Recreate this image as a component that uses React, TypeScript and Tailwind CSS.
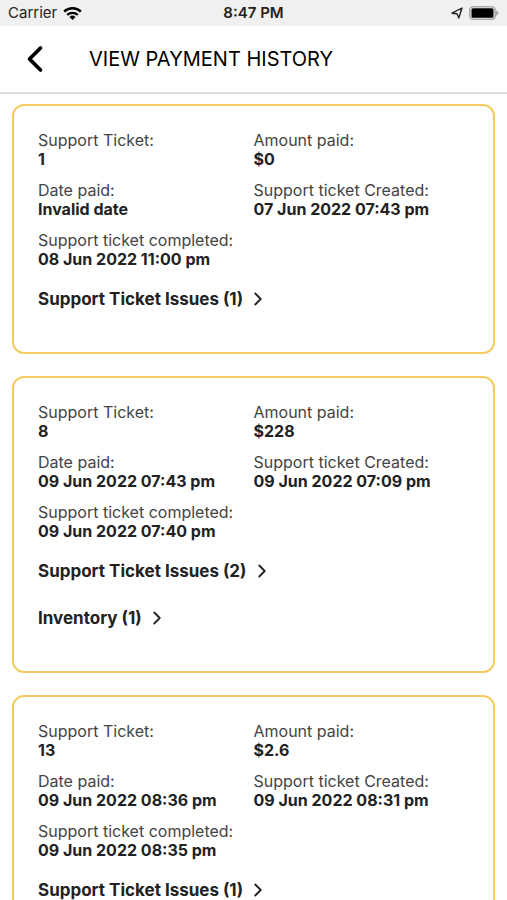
import { ChevronLeft, ChevronRight } from 'lucide-react';

type Ticket = {
  id: string;
  amount: string;
  paid: string;
  created: string;
  completed: string;
  links: string[];
};

const TICKETS: Ticket[] = [
  {
    id: '1',
    amount: '$0',
    paid: 'Invalid date',
    created: '07 Jun 2022 07:43 pm',
    completed: '08 Jun 2022 11:00 pm',
    links: ['Support Ticket Issues (1)'],
  },
  {
    id: '8',
    amount: '$228',
    paid: '09 Jun 2022 07:43 pm',
    created: '09 Jun 2022 07:09 pm',
    completed: '09 Jun 2022 07:40 pm',
    links: ['Support Ticket Issues (2)', 'Inventory (1)'],
  },
  {
    id: '13',
    amount: '$2.6',
    paid: '09 Jun 2022 08:36 pm',
    created: '09 Jun 2022 08:31 pm',
    completed: '09 Jun 2022 08:35 pm',
    links: ['Support Ticket Issues (1)'],
  },
];

function StatusBar() {
  return (
    <div className="grid h-[26px] grid-cols-3 items-center bg-[#f0f0f0] px-2 text-[14px] leading-5 text-[#222]">
      <div className="flex items-center gap-[6px]">
        <span className="text-[15px]">Carrier</span>
        <svg viewBox="0 0 20 14" className="h-[13px] w-[19px]" fill="none" stroke="#000" strokeWidth="2.6">
          <path d="M1 5a13 13 0 0 1 18 0" />
          <path d="M4.3 8.6a8.2 8.2 0 0 1 11.4 0" />
          <path d="M10 14L6.8 10.8a4.6 4.6 0 0 1 6.4 0z" fill="#000" stroke="none" />
        </svg>
      </div>
      <span className="text-center text-[15px] font-semibold">8:47 PM</span>
      <div className="flex items-center justify-end gap-[6px]">
        <svg viewBox="0 0 12 12" className="size-3" fill="none" stroke="currentColor" strokeWidth="1.4" strokeLinejoin="round">
          <path d="M1 6.2L11 1 7.8 11 6 6.8z" />
        </svg>
        <svg viewBox="0 0 30 14" className="h-[14px] w-[30px]">
          <rect x="0.8" y="0.8" width="25.4" height="12.4" rx="3.5" fill="#f0f0f0" stroke="#aaa" strokeWidth="1.6" />
          <rect x="2.5" y="2.2" width="22" height="9.6" rx="1.5" fill="#000" />
          <path d="M27 4l3 3-3 3z" fill="#aaa" />
        </svg>
      </div>
    </div>
  );
}

function Field({ label, value }: { label: string; value: string }) {
  return (
    <div>
      <dt className="text-[#444]">{label}</dt>
      <dd className="font-bold text-[#222]">{value}</dd>
    </div>
  );
}

function TicketCard({ ticket }: { ticket: Ticket }) {
  return (
    <li className="rounded-xl border-2 border-[#f5cb61] px-6 pt-[25px] pb-[41px]">
      <dl className="grid grid-cols-2 gap-y-3 text-[16px] leading-[19px]">
        <Field label="Support Ticket:" value={ticket.id} />
        <Field label="Amount paid:" value={ticket.amount} />
        <Field label="Date paid:" value={ticket.paid} />
        <Field label="Support ticket Created:" value={ticket.created} />
        <Field label="Support ticket completed:" value={ticket.completed} />
      </dl>
      <div className="mt-[18px] flex flex-col items-start gap-[23px]">
        {ticket.links.map((link) => (
          <button key={link} type="button" className="flex items-center gap-1 text-[17px] leading-6 font-bold text-[#222]">
            {link}
            <ChevronRight className="size-[22px]" strokeWidth={2} />
          </button>
        ))}
      </div>
    </li>
  );
}

export default function App() {
  return (
    <div className="min-h-screen bg-white font-['Inter',sans-serif]">
      <StatusBar />
      <header className="flex h-[68px] items-center gap-8 border-b-2 border-[#ddd] px-[13px]">
        <button type="button" aria-label="Back">
          <ChevronLeft className="size-11 text-black" strokeWidth={2} />
        </button>
        <h1 className="text-[20px] leading-7 text-black">VIEW PAYMENT HISTORY</h1>
      </header>
      <ul className="flex flex-col gap-[22px] px-3 pt-[10px]">
        {TICKETS.map((ticket) => (
          <TicketCard key={ticket.id} ticket={ticket} />
        ))}
      </ul>
    </div>
  );
}
